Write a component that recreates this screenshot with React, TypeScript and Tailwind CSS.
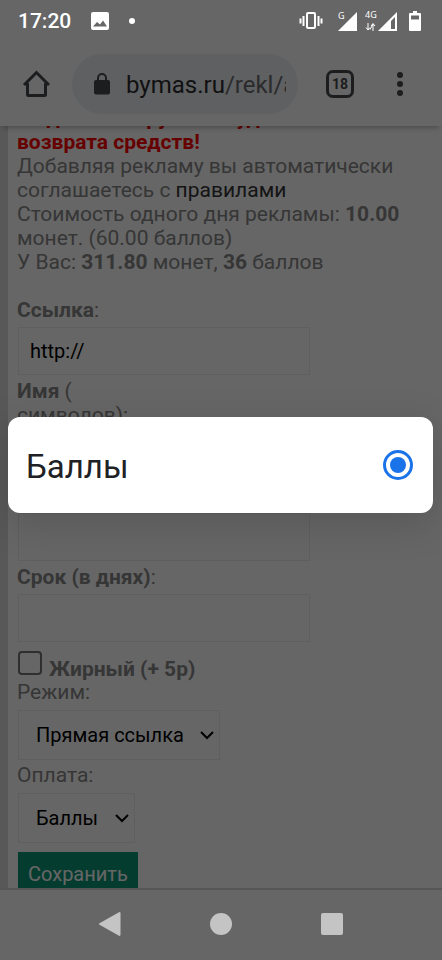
import React, { useState } from 'react';

export default function App() {
  return (
    <div className="relative flex h-screen flex-col overflow-hidden bg-white font-[Roboto,sans-serif]">
      <StatusBar />
      <BrowserBar />
      <main className="flex flex-1 flex-col overflow-hidden border-b-2 border-[#d8d8d8] bg-[#dcdcdc] pl-2">
        <AdForm />
      </main>
      <NavBar />
      <PaymentPicker />
    </div>
  );
}

function StatusBar() {
  return (
    <header className="relative z-20 flex h-[42px] shrink-0 items-center justify-between pr-[21px] pl-[18px] text-white">
      <div className="flex items-center gap-5">
        <span className="text-[21px] leading-6 font-medium">17:20</span>
        <svg className="h-[18px] w-[18px]" viewBox="0 0 18 18" fill="currentColor">
          <path fillRule="evenodd" d="M2 0h14a2 2 0 0 1 2 2v14a2 2 0 0 1-2 2H2a2 2 0 0 1-2-2V2a2 2 0 0 1 2-2Zm0 14.500h14L12 8.500l-3 4-3-2.500Z" />
        </svg>
        <span className="h-[6px] w-[6px] rounded-full bg-white" />
      </div>
      <div className="flex items-center">
        <svg className="mr-[14px] h-5 w-6" viewBox="0 0 24 20" fill="none" stroke="currentColor" strokeWidth="2">
          <rect x="8" y="2" width="8" height="15" rx="1" />
          <path d="M4.500 5v10M19.500 5v10M1.500 7.500v5M22.500 7.500v5" />
        </svg>
        <svg className="mr-2 h-5 w-5" viewBox="0 0 20 20" fill="currentColor">
          <path d="M20 1v19H1Z" />
          <text x="1" y="8" fontSize="9" fontFamily="Noto Sans">G</text>
        </svg>
        <svg className="mr-3 h-5 w-8" viewBox="0 0 32 20">
          <path fill="currentColor" fillRule="evenodd" d="M32 1v19H13Zm-2 5-4 4v8h4Z" />
          <text x="0" y="7" fontSize="9" fill="currentColor" fontFamily="Noto Sans">4G</text>
          <path d="M3 12v7M1 16.500l2 2.500 2-2.500M5 18.500l3-5M8 20v-7M6 15l2-2.500 2 2.500" fill="none" stroke="currentColor" />
        </svg>
        <svg className="h-5 w-3" viewBox="0 0 12 20" fill="currentColor">
          <path fillRule="evenodd" d="M4 0h4v2h3a1 1 0 0 1 1 1v16a1 1 0 0 1-1 1H1a1 1 0 0 1-1-1V3a1 1 0 0 1 1-1h3ZM2 4.500v4h8v-4Z" />
        </svg>
      </div>
    </header>
  );
}

function BrowserBar() {
  return (
    <nav className="relative flex h-[84px] shrink-0 items-center bg-white pr-8 pl-[22px] text-[#48494c] shadow-[0_5px_5px_-3px_rgba(0,0,0,0.25)]">
      <button type="button" aria-label="Домой" className="mr-[22px]">
        <svg className="h-7 w-7" viewBox="0 0 28 28" fill="none" stroke="currentColor" strokeWidth="3">
          <path d="M2 15 14.500 2.500 27 15M5.500 13v11.500a1 1 0 0 0 1 1h16a1 1 0 0 0 1-1V13" />
        </svg>
      </button>
      <button type="button" className="mr-7 flex h-[60px] min-w-0 flex-1 items-center rounded-full bg-[#eef1f5] pr-3 pl-[22px]">
        <svg className="mr-4 h-[22px] w-4 shrink-0" viewBox="0 0 16 22">
          <rect y="7" width="16" height="14.500" rx="2" fill="currentColor" />
          <path d="M4 8V5a4 4 0 0 1 8 0v3" fill="none" stroke="currentColor" strokeWidth="2" />
        </svg>
        <span className="overflow-hidden pt-0.5 text-[24px] leading-8 whitespace-nowrap text-[#6b6b6f]">
          <span className="text-[#2b2b2e]">bymas.ru</span>/rekl/add
        </span>
      </button>
      <button type="button" className="mr-9 flex h-7 w-7 items-center justify-center rounded-[7px] border-3 border-current text-[14px] font-bold">
        18
      </button>
      <button type="button" aria-label="Меню">
        <svg className="h-7 w-5" viewBox="0 0 20 28" fill="currentColor">
          <circle cx="10" cy="5" r="3" />
          <circle cx="10" cy="14" r="3" />
          <circle cx="10" cy="23" r="3" />
        </svg>
      </button>
    </nav>
  );
}

function AdForm() {
  return (
    <div className="-mt-5 flex-1 bg-white pl-[9px] text-[21px] leading-6 text-[#888]">
      <p className="font-bold text-[#f00]">
        За данное нарушать будет
        <br />
        возврата средств!
      </p>
      <p>
        Добавляя рекламу вы автоматически соглашаетесь с <a href="#rules" className="text-[#333]">правилами</a>
      </p>
      <p>
        Стоимость одного дня рекламы: <b>10.00</b> монет. (60.00 баллов)
      </p>
      <p className="mb-6">
        У Вас: <b>311.80</b> монет, <b>36</b> баллов
      </p>
      <form>
        <TextField id="link" value="http://">
          <b>Ссылка</b>:
        </TextField>
        <TextField id="name">
          <b>Имя</b> (
          <br />
          символов):
        </TextField>
        <TextField id="color">
          <b>Цвет</b>:
        </TextField>
        <TextField id="days">
          <b>Срок (в днях)</b>:
        </TextField>
        <div className="mt-[9px] mb-[5px] ml-px flex h-6 gap-[7px]">
          <input
            id="bold"
            type="checkbox"
            className="h-6 w-6 shrink-0 appearance-none rounded-[4px] border-2 border-[#767676]"
          />
          <label htmlFor="bold" className="mt-[6px] font-bold">
            Жирный (+ 5р)
          </label>
        </div>
        <SelectField id="mode" label="Режим:" option="Прямая ссылка" />
        <SelectField id="payment" label="Оплата:" option="Баллы" />
        <button type="button" className="mt-[6px] ml-px h-11 bg-[#0d9678] px-[10px] text-[20px] text-white">
          Сохранить
        </button>
      </form>
    </div>
  );
}

function TextField({ id, value = '', children }: { id: string; value?: string; children: React.ReactNode }) {
  return (
    <div className="mb-1">
      <label htmlFor={id} className="block">
        {children}
      </label>
      <input
        id={id}
        type="text"
        defaultValue={value}
        className="mt-[5px] ml-px block h-12 w-[292px] border border-[#eee] bg-white px-[11px] text-[20px] text-black"
      />
    </div>
  );
}

function SelectField({ id, label, option }: { id: string; label: string; option: string }) {
  return (
    <div className="mb-[3px]">
      <label htmlFor={id} className="block">
        {label}
      </label>
      <div className="relative mt-[6px] ml-px inline-block align-top text-[20px] text-black">
        <select id={id} className="h-[50px] appearance-none border border-[#eee] bg-white pr-[35px] pl-[17px]">
          <option>{option}</option>
        </select>
        <svg
          className="pointer-events-none absolute top-5 right-[6px] h-[10px] w-[14px]"
          viewBox="0 0 14 10"
          fill="none"
          stroke="currentColor"
          strokeWidth="2"
        >
          <path d="m1 2 6 6 6-6" />
        </svg>
      </div>
    </div>
  );
}

function NavBar() {
  return (
    <footer className="relative z-20 h-[70px] shrink-0 pb-0.5 text-[#c4c4c4]">
      <div className="mx-auto grid h-full w-3/4 grid-cols-3 place-items-center">
        <button type="button" aria-label="Назад">
          <svg className="h-6 w-6" viewBox="0 0 24 24" fill="currentColor">
            <path d="M.5 11.200 20 .2q1.500-.6 1.500 1v21.600q0 1.600-1.500 1L.5 12.800q-1-.8 0-1.600Z" />
          </svg>
        </button>
        <button type="button" aria-label="Главный экран" className="h-[22px] w-[22px] rounded-full bg-current" />
        <button type="button" aria-label="Недавние" className="h-[22px] w-[22px] rounded-[2px] bg-current" />
      </div>
    </footer>
  );
}

function PaymentPicker() {
  const [selected, setSelected] = useState(true);

  return (
    <div className="absolute inset-0 z-10 flex items-center bg-black/60 pr-[9px] pb-[30px] pl-2">
      <div role="dialog" className="flex h-24 flex-1 items-center justify-between rounded-xl bg-white pr-5 pl-[18px] shadow-[0_10px_40px_rgba(0,0,0,0.15)]">
        <label htmlFor="points" className="pt-1 text-[33px] leading-10 text-[#202124]">
          Баллы
        </label>
        <input
          id="points"
          type="radio"
          checked={selected}
          onChange={() => setSelected(true)}
          className="h-[30px] w-[30px] appearance-none rounded-full border-3 border-[#1a73e8] bg-[#1a73e8] bg-clip-content p-1"
        />
      </div>
    </div>
  );
}
